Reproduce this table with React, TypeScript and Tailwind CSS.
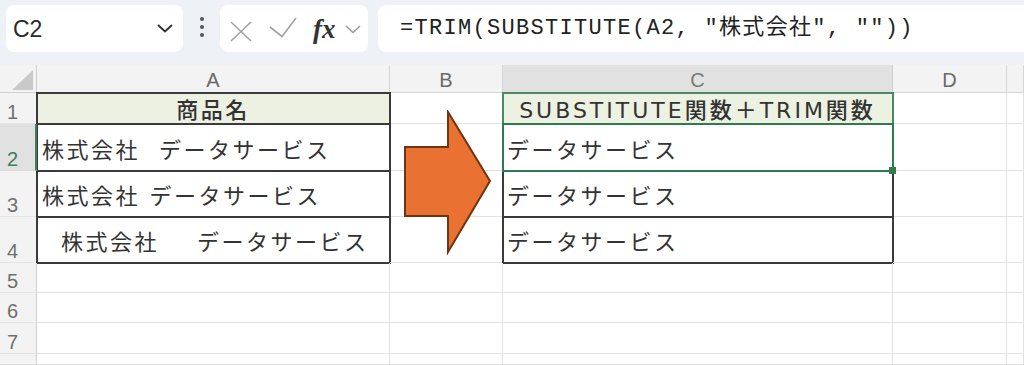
import React from "react";

const cellText =
  "font-['DejaVu_Sans','Noto_Sans_CJK_JP',sans-serif] text-[22px] tracking-[2.5px] leading-none text-[#333]";
const grid = "border-r border-b border-[#e2e2e2]";
const tbl = "outline-2 -outline-offset-1 outline-[#3a3a3a]";

function Toolbar() {
  return (
    <div className="h-[65px] bg-[#eef1f5] flex items-start pt-[5px] pl-[6px]">
      {/* Name box */}
      <div className="w-[177px] h-[47px] bg-white rounded-[8px] flex items-center justify-between pl-[7px] pr-[10px]">
        <span className="text-[23px] leading-none text-[#2a2a2a] font-['Liberation_Sans',sans-serif] mt-[2px]">C2</span>
        <svg width="16" height="9" viewBox="0 0 16 9">
          <polyline points="1,1 8,7.5 15,1" fill="none" stroke="#333" strokeWidth="2" />
        </svg>
      </div>
      {/* dots */}
      <div className="w-[37px] h-[47px] flex flex-col items-center justify-center gap-[4px] pb-[3px]">
        <span className="w-[4px] h-[4px] rounded-full bg-[#555]" />
        <span className="w-[4px] h-[4px] rounded-full bg-[#555]" />
        <span className="w-[4px] h-[4px] rounded-full bg-[#555]" />
      </div>
      {/* cancel / enter / fx */}
      <div className="w-[148px] h-[47px] bg-white rounded-[8px] flex items-center pl-[10px]">
        <svg width="22" height="21" viewBox="0 0 22 21" className="mt-[6px]">
          <line x1="1" y1="1" x2="21" y2="20" stroke="#a3a3a3" strokeWidth="1.6" />
          <line x1="21" y1="1" x2="1" y2="20" stroke="#a3a3a3" strokeWidth="1.6" />
        </svg>
        <svg width="28" height="21" viewBox="0 0 28 21" className="ml-[17px] mt-[-2px]">
          <polyline points="1,10 13,19.5 27,1" fill="none" stroke="#a3a3a3" strokeWidth="1.6" />
        </svg>
        <span className="ml-[16px] font-['Liberation_Serif',serif] italic font-bold text-[27px] leading-none text-[#333] mt-[2px]">
          fx
        </span>
        <svg width="16" height="9" viewBox="0 0 16 9" className="ml-[9px] mt-[1px]">
          <polyline points="1,1 8,7.5 15,1" fill="none" stroke="#9a9a9a" strokeWidth="1.5" />
        </svg>
      </div>
      {/* formula */}
      <div className="ml-[10px] flex-1 h-[47px] bg-white rounded-l-[8px] flex items-center pl-[22px]">
        <span className="font-['Liberation_Mono','Noto_Sans_CJK_JP',monospace] text-[22px] tracking-[1.3px] leading-none text-[#222] whitespace-pre">
          =TRIM(SUBSTITUTE(A2, "株式会社", ""))
        </span>
      </div>
    </div>
  );
}

function ColHead({ label, active }: { label: string; active?: boolean }) {
  return (
    <div
      className={
        active
          ? "bg-[#e1e1e1] border-r border-b border-[#cfcfcf] flex items-end justify-center text-[20px] leading-none text-[#777] pb-[2px]"
          : "bg-[#f3f3f3] border-r border-b border-[#d6d6d6] flex items-end justify-center text-[20px] leading-none text-[#6a6a6a] pb-[2px]"
      }
    >
      {label}
    </div>
  );
}

function RowHead({ n, active }: { n?: number; active?: boolean }) {
  return (
    <div
      className={
        active
          ? "relative z-20 bg-[#e1e1e1] border-b border-[#dcdcdc] border-r-2 border-r-[#3b8159] flex items-end pl-[7px] pb-[1px] text-[20px] leading-none text-[#3b8159]"
          : "bg-[#f3f3f3] border-b border-[#e3e3e3] border-r border-r-[#cfcfcf] flex items-end pl-[7px] pb-[1px] text-[20px] leading-none text-[#707070]"
      }
    >
      {n}
    </div>
  );
}

function Arrow() {
  return (
    <svg
      width="90"
      height="145"
      viewBox="-2 -2 90 145"
      className="absolute left-[403px] top-[45px]"
    >
      <polygon
        points="0,35 43,35 43,0 85,69 43,140 43,104 0,104"
        fill="#e97132"
        stroke="#6e3414"
        strokeWidth="2"
        strokeLinejoin="miter"
      />
    </svg>
  );
}

export default function App() {
  return (
    <div className="w-[1024px] h-[365px] overflow-hidden bg-white font-['Liberation_Sans',sans-serif]">
      <Toolbar />
      <div className="relative">
        <div className="grid grid-cols-[37px_353px_113px_390px_114px_1fr] grid-rows-[28px_31px_47px_46px_46px_30px_30px_31px_11px]">
          {/* header row */}
          <div className="bg-[#f3f3f3] border-r border-b border-[#cfcfcf] flex items-start pl-[12px] pt-[5px]">
            <svg width="21" height="20" viewBox="0 0 21 20">
              <polygon points="21,0 21,20 0,20" fill="#c9c9c9" />
            </svg>
          </div>
          <ColHead label="A" />
          <ColHead label="B" />
          <ColHead label="C" active />
          <ColHead label="D" />
          <ColHead label="" />

          {/* row 1 */}
          <RowHead n={1} />
          <div className={`${grid} ${tbl} bg-[#ecf1e1] flex items-end justify-center pb-[1px] ${cellText} font-medium`}>
            商品名
          </div>
          <div className={grid} />
          <div className={`${grid} outline-2 -outline-offset-1 outline-[#4a8a60] bg-[#ecf1e1] flex items-end justify-center pb-[1px] ${cellText} tracking-[3px] font-medium`}>
            SUBSTITUTE関数＋TRIM関数
          </div>
          <div className={grid} />
          <div className={grid} />

          {/* row 2 */}
          <RowHead n={2} active />
          <div className={`${grid} ${tbl} flex items-end pl-[5px] pb-[8px] whitespace-pre ${cellText}`}>
            株式会社  データサービス
          </div>
          <div className={grid} />
          <div className={`relative z-10 ${grid} outline-2 -outline-offset-1 outline-[#2f7a4e] flex items-end pl-[4px] pb-[8px] ${cellText}`}>
            データサービス
            <span className="absolute right-[-4px] bottom-[-4px] w-[7px] h-[7px] bg-[#2f7a4e]" />
          </div>
          <div className={grid} />
          <div className={grid} />

          {/* row 3 */}
          <RowHead n={3} />
          <div className={`${grid} ${tbl} flex items-end pl-[5px] pb-[8px] whitespace-pre ${cellText}`}>
            株式会社 データサービス
          </div>
          <div className={grid} />
          <div className={`${grid} ${tbl} flex items-end pl-[4px] pb-[8px] ${cellText}`}>データサービス</div>
          <div className={grid} />
          <div className={grid} />

          {/* row 4 */}
          <RowHead n={4} />
          <div className={`${grid} ${tbl} flex items-end pl-[5px] pb-[8px] whitespace-pre ${cellText}`}>
            {"  株式会社    データサービス"}
          </div>
          <div className={grid} />
          <div className={`${grid} ${tbl} flex items-end pl-[4px] pb-[8px] ${cellText}`}>データサービス</div>
          <div className={grid} />
          <div className={grid} />

          {/* rows 5-8 */}
          {[5, 6, 7, 8].map((n) => (
            <React.Fragment key={n}>
              <RowHead n={n < 8 ? n : undefined} />
              <div className={grid} />
              <div className={grid} />
              <div className={grid} />
              <div className={grid} />
              <div className={grid} />
            </React.Fragment>
          ))}
        </div>
        <Arrow />
      </div>
    </div>
  );
}
